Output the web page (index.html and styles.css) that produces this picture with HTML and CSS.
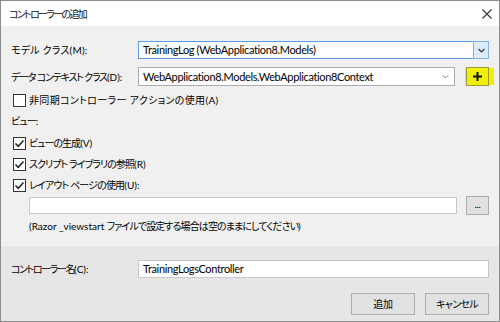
FILE: index.html
```html
<!DOCTYPE html>
<html lang="ja">
<head>
<meta charset="utf-8">
<link rel="stylesheet" href="styles.css">
</head>
<body>
<div class="window">
  <div class="titlebar">
    <span class="jp title">コントローラーの追加</span>
    <svg class="close" width="10" height="10" viewBox="0 0 10 10"><path d="M0.5 0.5L9.5 9.5M9.5 0.5L0.5 9.5" stroke="#333" stroke-width="1.1" fill="none"/></svg>
  </div>
  <div class="content">
    <div class="row r1">
      <span class="jp lbl-model">モデル クラス(M):</span>
      <div class="combo focus">
        <span class="val">TrainingLog (WebApplication8.Models)</span>
        <span class="dropbtn"><svg width="7" height="5" viewBox="0 0 7 5"><path d="M0.5 1L3.5 4L6.5 1" stroke="#333" stroke-width="1.2" fill="none"/></svg></span>
      </div>
    </div>
    <div class="row r2">
      <span class="jp lbl-context">データ コンテキスト クラス<span class="key">(D):</span></span>
      <div class="field2">
        <div class="combo">
          <span class="val">WebApplication8.Models.WebApplication8Context</span>
          <span class="arrow"><svg width="7" height="5" viewBox="0 0 7 5"><path d="M0.5 1L3.5 4L6.5 1" stroke="#888" stroke-width="1" fill="none"/></svg></span>
        </div>
        <span class="hl"><span class="plusbtn"><svg width="11" height="11" viewBox="0 0 11 11"><path d="M5.5 1V10M1 5.5H10" stroke="#111" stroke-width="2" fill="none"/></svg></span></span>
      </div>
    </div>
    <div class="check c1"><span class="box"></span><span class="jp lbl-async">非同期コントローラー アクションの使用(A)</span></div>
    <div class="jp section">ビュー:</div>
    <div class="check c2"><span class="box on"><svg width="11" height="11" viewBox="0 0 11 11"><path d="M1.5 5.5L4.2 8.3L9.5 2.5" stroke="#222" stroke-width="1.5" fill="none"/></svg></span><span class="jp lbl-gen">ビューの生成<span class="key">(V)</span></span></div>
    <div class="check c3"><span class="box on"><svg width="11" height="11" viewBox="0 0 11 11"><path d="M1.5 5.5L4.2 8.3L9.5 2.5" stroke="#222" stroke-width="1.5" fill="none"/></svg></span><span class="jp lbl-script">スクリプト ライブラリの参照<span class="key">(R)</span></span></div>
    <div class="check c4"><span class="box on"><svg width="11" height="11" viewBox="0 0 11 11"><path d="M1.5 5.5L4.2 8.3L9.5 2.5" stroke="#222" stroke-width="1.5" fill="none"/></svg></span><span class="jp lbl-layout">レイアウト ページの使用<span class="key">(U):</span></span></div>
    <div class="layoutrow">
      <span class="textbox wide"></span>
      <span class="btn small">...</span>
    </div>
    <div class="jp help"><span class="key">(Razor _viewstart </span>ファイルで設定する場合は空のままにしてください<span class="key">)</span></div>
  </div>
  <div class="footer">
    <div class="row r3">
      <span class="jp lbl-name">コントローラー名<span class="key">(C):</span></span>
      <span class="textbox name">TrainingLogsController</span>
    </div>
    <div class="buttons">
      <span class="btn big jp">追加</span>
      <span class="btn big jp btn-cancel">キャンセル</span>
    </div>
  </div>
</div>
</body>
</html>
```

FILE: styles.css
```css
* { box-sizing: border-box; }
html, body { margin: 0; padding: 0; }
body {
  width: 500px;
  height: 322px;
  font-family: Lato, "Noto Sans CJK JP", sans-serif;
  font-size: 11px;
  line-height: 16px;
  letter-spacing: -0.35px;
  font-feature-settings: "palt";
  color: #000;
  background: #fff;
  white-space: nowrap;
}
.jp { font-size: 10px; }
.key { letter-spacing: 0; }
.title { letter-spacing: -1.68px; color: #111; }
.lbl-model { letter-spacing: 0.2px; }
.lbl-context { letter-spacing: -1.2px; }
.lbl-async { letter-spacing: 0.35px; }
.section { letter-spacing: -0.9px; }
.lbl-gen { letter-spacing: -1px; }
.lbl-script { letter-spacing: -0.95px; }
.lbl-layout { letter-spacing: -0.85px; }
.help { letter-spacing: -0.9px; }
.lbl-name { letter-spacing: -1.4px; }
.btn-cancel { letter-spacing: -0.66px; }
.window {
  width: 500px;
  height: 322px;
  border: 1px solid #8c8c8c;
  display: flex;
  flex-direction: column;
  overflow: hidden;
}
.titlebar {
  height: 25px;
  flex: none;
  background: #fff;
  display: flex;
  align-items: center;
  justify-content: space-between;
  padding: 0 7px 0 8px;
}
.content {
  height: 220px;
  flex: none;
  background: #f0f0f0;
  padding: 15px 10px 0 10px;
  display: flex;
  flex-direction: column;
}
.row {
  display: grid;
  grid-template-columns: 127px 1fr;
  align-items: center;
}
.combo {
  height: 18px;
  background: #fff;
  border: 1px solid #acacac;
  display: flex;
  align-items: center;
  padding-left: 4px;
}
.combo .val { flex: 1; overflow: hidden; }
.combo.focus { border-color: #569de5; }
.dropbtn {
  width: 16px;
  align-self: stretch;
  background: #dcecfc;
  border: 1px solid #7eb4ea;
  display: flex;
  align-items: center;
  justify-content: center;
  margin: -1px -1px -1px 0;
}
.arrow { width: 18px; display: flex; justify-content: center; }
.r2 { margin-top: 8px; }
.r2 .combo { height: 19px; }
.field2 { display: flex; align-items: center; gap: 10px; }
.field2 .combo { flex: 1; }
.hl {
  background: #f0f000;
  padding: 1px 5px 1px 1px;
  margin-right: -5px;
  display: flex;
}
.plusbtn {
  width: 23px;
  height: 19px;
  border: 1px solid #9a9a3a;
  display: flex;
  align-items: center;
  justify-content: center;
  margin: -2px 0;
}
.check {
  display: flex;
  align-items: center;
  height: 16px;
  padding-left: 2px;
}
.box {
  width: 13px;
  height: 13px;
  border: 1px solid #333;
  background: #fff;
  margin-right: 3px;
  display: flex;
  align-items: center;
  justify-content: center;
}
.c1 { margin-top: 6px; }
.section { height: 16px; margin-top: 5px; }
.c2 { margin-top: 6px; }
.c3 { margin-top: 5px; }
.c4 { margin-top: 5px; }
.layoutrow {
  display: flex;
  align-items: center;
  gap: 9px;
  margin-top: 3px;
  padding-left: 18px;
}
.textbox {
  height: 18px;
  background: #fff;
  border: 1px solid #c8c8c8;
  display: flex;
  align-items: center;
  padding-left: 4px;
}
.textbox.wide { flex: 1; height: 17px; }
.btn {
  background: #e1e1e1;
  border: 1px solid #adadad;
  display: flex;
  align-items: center;
  justify-content: center;
}
.btn.small { width: 23px; height: 19px; font-size: 10px; line-height: 10px; padding-bottom: 3px; }
.help { margin-top: 3px; padding-left: 18px; height: 16px; }
.footer {
  flex: 1;
  background: #e6e6e6;
  padding: 14px 10px 0 10px;
}
.buttons {
  display: flex;
  justify-content: flex-end;
  gap: 10px;
  margin-top: 15px;
}
.btn.big { width: 64px; height: 22px; }
```
